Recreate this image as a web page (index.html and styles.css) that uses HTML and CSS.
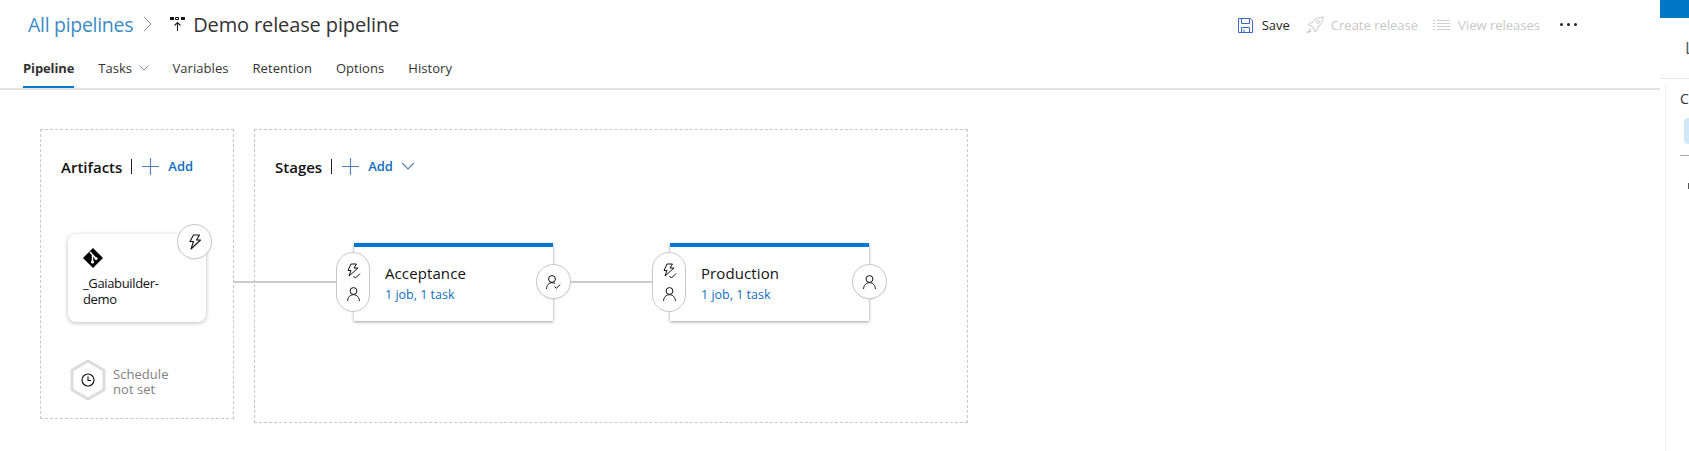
FILE: index.html
```html
<!DOCTYPE html>
<html lang="en">
<head>
<meta charset="utf-8">
<title>Demo release pipeline</title>
<link rel="stylesheet" href="styles.css">
</head>
<body>
<div class="app">
  <main class="main">
    <header class="header">
      <a class="crumb">All pipelines</a>
      <svg class="crumb-sep" width="9" height="16" viewBox="0 0 9 16"><path d="M1 1l7 7-7 7" fill="none" stroke="#8a8a8a" stroke-width="1"/></svg>
      <svg class="pipe-icon" width="16" height="16" viewBox="0 0 16 16"><path d="M0 1h4v3H0zM11 1h4v3h-4z" fill="#111"/><path d="M5.500 1.500h3v2h-3z" fill="#fff" stroke="#111"/><path d="M7.500 15V7M4.500 9.500l3-3 3 3" fill="none" stroke="#222" stroke-width="1.100"/></svg>
      <h1 class="title">Demo release pipeline</h1>
      <div class="toolbar">
        <button class="tool save">
          <svg width="15" height="15" viewBox="0 0 15 15"><path d="M.5.5h11.800l2.200 2.200v11.800H.5z M3.500.5v5h8v-5 M3.500 14.500v-5h8v5 M6 11.500v3" fill="none" stroke="#3a68c4" stroke-width="1"/></svg>
          <span>Save</span>
        </button>
        <button class="tool off rel">
          <svg width="18" height="18" viewBox="0 0 18 18"><path d="M17 1c-5 .2-8 2-10.500 5.500L4 7 2.500 9 5 9.800 8.200 13l.8 2.500 2-1.500.5-2.500C15 9 16.800 6 17 1z" fill="none" stroke="#cfcfcf" stroke-width="1.100"/><circle cx="12" cy="6" r="1.500" fill="none" stroke="#cfcfcf"/><path d="M5 12.500L1 17l4.500-2" fill="none" stroke="#cfcfcf" stroke-width="1.200"/></svg>
          <span>Create release</span>
        </button>
        <button class="tool off view">
          <svg width="17" height="12" viewBox="0 0 17 12"><path d="M4 1.500h13M4 4.500h13M4 7.500h13M4 10.500h13M0 1.500h2M0 4.500h2M0 7.500h2M0 10.500h2" stroke="#cfcfcf" stroke-width="1"/></svg>
          <span>View releases</span>
        </button>
        <div class="more" aria-label="More"><i></i><i></i><i></i></div>
      </div>
    </header>
    <nav class="tabs">
      <a class="tab active">Pipeline</a>
      <a class="tab tasks">Tasks <svg width="10" height="6" viewBox="0 0 10 6"><path d="M.5.5L5 5 9.500.5" fill="none" stroke="#8a8a8a"/></svg></a>
      <a class="tab">Variables</a>
      <a class="tab">Retention</a>
      <a class="tab">Options</a>
      <a class="tab">History</a>
    </nav>
    <section class="canvas">
      <div class="link link-a"></div>
      <div class="group artifacts">
        <div class="group-head">
          <span class="group-title">Artifacts</span>
          <span class="divider"></span>
          <svg class="plus" width="17" height="17" viewBox="0 0 17 17"><path d="M8.500 0v17M0 8.500h17" stroke="#4f82b8" stroke-width="1.100"/></svg>
          <span class="add">Add</span>
        </div>
        <div class="artifact">
          <svg class="git" width="20" height="20" viewBox="0 0 20 20"><path d="M10 0l10 10-10 10L0 10z" fill="#000"/><path d="M7 4l6 6.500M9.500 7v7" stroke="#fff" stroke-width="1.500" fill="none"/><circle cx="9.500" cy="14" r="1.600" fill="#fff"/><circle cx="13" cy="10.500" r="1.600" fill="#fff"/></svg>
          <div class="artifact-name">_Gaiabuilder-<br>demo</div>
          <div class="badge artifact-badge">
            <svg width="12" height="16" viewBox="0 0 12 16"><path d="M4.500 1h6L7.500 6h4L2 15l2.500-7.500H1z" fill="none" stroke="#111" stroke-width="1.100" stroke-linejoin="round"/></svg>
          </div>
        </div>
        <div class="schedule">
          <svg width="36" height="42" viewBox="0 0 36 42"><path d="M18 2l16 9.300v19.400L18 40 2 30.700V11.300z" fill="#fff" stroke="#dcdcdc" stroke-width="3"/><circle cx="18" cy="21" r="6" fill="none" stroke="#111" stroke-width="1.100"/><path d="M18 17.500V21.500h3" fill="none" stroke="#111" stroke-width="1.100"/></svg>
          <div class="schedule-text">Schedule<br>not set</div>
        </div>
      </div>
      <div class="group stages">
        <div class="group-head">
          <span class="group-title">Stages</span>
          <span class="divider"></span>
          <svg class="plus" width="17" height="17" viewBox="0 0 17 17"><path d="M8.500 0v17M0 8.500h17" stroke="#4f82b8" stroke-width="1.100"/></svg>
          <span class="add">Add</span>
          <svg class="add-chev" width="14" height="8" viewBox="0 0 14 8"><path d="M1 1l6 6 6-6" fill="none" stroke="#5c7fa3" stroke-width="1.100"/></svg>
        </div>
        <div class="stage-row">
          <div class="stage">
            <div class="pill">
              <svg width="15" height="16" viewBox="0 0 15 16"><path d="M5 1h5.500L8 5h4L3 13l2-5.500H2z" fill="none" stroke="#111" stroke-width="1" stroke-linejoin="round"/><path d="M7.500 13l2 2 4.500-4.500" fill="none" stroke="#111" stroke-width="1"/></svg>
              <svg width="13" height="14" viewBox="0 0 13 14"><circle cx="6.500" cy="4" r="3.400" fill="none" stroke="#111" stroke-width="1"/><path d="M.6 14c0-3.700 2.600-6.300 5.900-6.300s5.900 2.600 5.900 6.300" fill="none" stroke="#111" stroke-width="1"/></svg>
            </div>
            <div class="stage-name">Acceptance</div>
            <div class="stage-meta">1 job, 1 task</div>
            <div class="badge stage-badge">
              <svg width="15" height="14" viewBox="0 0 15 14"><circle cx="6" cy="4" r="3.400" fill="none" stroke="#111" stroke-width="1"/><path d="M.6 14c0-3.700 2.300-6.300 5.400-6.300 1.200 0 2.200.3 3 .9" fill="none" stroke="#111" stroke-width="1"/><path d="M8.500 11.500l1.800 1.800 4-3.800" fill="none" stroke="#111" stroke-width="1"/></svg>
            </div>
          </div>
          <div class="link link-b"></div>
          <div class="stage">
            <div class="pill">
              <svg width="15" height="16" viewBox="0 0 15 16"><path d="M5 1h5.500L8 5h4L3 13l2-5.500H2z" fill="none" stroke="#111" stroke-width="1" stroke-linejoin="round"/><path d="M7.500 13l2 2 4.500-4.500" fill="none" stroke="#111" stroke-width="1"/></svg>
              <svg width="13" height="14" viewBox="0 0 13 14"><circle cx="6.500" cy="4" r="3.400" fill="none" stroke="#111" stroke-width="1"/><path d="M.6 14c0-3.700 2.600-6.300 5.900-6.300s5.900 2.600 5.900 6.300" fill="none" stroke="#111" stroke-width="1"/></svg>
            </div>
            <div class="stage-name">Production</div>
            <div class="stage-meta">1 job, 1 task</div>
            <div class="badge stage-badge">
              <svg width="13" height="14" viewBox="0 0 13 14"><circle cx="6.500" cy="4" r="3.400" fill="none" stroke="#111" stroke-width="1"/><path d="M.6 14c0-3.700 2.600-6.300 5.900-6.300s5.900 2.600 5.900 6.300" fill="none" stroke="#111" stroke-width="1"/></svg>
            </div>
          </div>
        </div>
      </div>
    </section>
  </main>
  <aside class="side">
    <div class="side-bar"></div>
    <div class="side-head">L</div>
    <div class="side-body">
      <div class="side-label">C</div>
      <div class="side-chip"></div>
      <div class="side-rule"></div>
      <div class="side-mark"></div>
    </div>
  </aside>
</div>
</body>
</html>
```
FILE: styles.css
```css
* { box-sizing: border-box; }
html, body { margin: 0; padding: 0; background: #fff; }
body { font-family: "Open Sans", "Noto Sans", "Liberation Sans", sans-serif; color: #212121; }
.app { display: flex; width: 1689px; height: 451px; overflow: hidden; }
.main { width: 1660px; flex: none; display: flex; flex-direction: column; }

.header { height: 48px; display: flex; align-items: center; padding-left: 28px; }
.crumb { font-size: 19.500px; letter-spacing: -0.3px; color: #3a8cc4; }
.crumb-sep { margin-left: 10px; }
.pipe-icon { margin-left: 18px; }
.title { margin: 0 0 0 7px; font-size: 20px; font-weight: 400; letter-spacing: -0.12px; color: #333; }
.toolbar { margin-left: auto; margin-top: 2px; margin-right: 83px; display: flex; align-items: center; }
.tool { display: flex; align-items: center; border: 0; background: none; padding: 0; font: inherit; font-size: 13px; color: #222; }
.tool.off { color: #c8c8c8; }
.save { gap: 9px; }
.rel { gap: 7px; margin-left: 16px; }
.view { gap: 8px; margin-left: 15px; }
.more { display: flex; gap: 4px; margin-left: 20px; margin-top: -1px; }
.more i { width: 3px; height: 3px; background: #222; border-radius: 50%; }

.tabs { height: 42px; display: flex; align-items: flex-start; gap: 24px; padding-left: 23px; border-bottom: 2px solid #e2e2e2; }
.tab { height: 40px; padding-top: 10px; font-size: 13px; line-height: 20px; color: #333; letter-spacing: 0.05px; white-space: nowrap; }
.tab.active { font-weight: 700; border-bottom: 2px solid #0078d4; letter-spacing: -0.12px; }
.tasks svg { margin-left: 3px; vertical-align: 2px; }

.canvas { position: relative; flex: 1; display: flex; align-items: flex-start; gap: 20px; padding: 39px 0 0 40px; }
.group { border: 1px dashed #c8c8c8; }
.artifacts { width: 194px; height: 290px; padding: 19px 0 0 20px; }
.stages { width: 714px; height: 294px; padding: 19px 0 0 20px; }
.group-head { display: flex; align-items: center; height: 34px; }
.group-title { margin-top: 2px; font-size: 15px; font-weight: 600; color: #111; }
.divider { width: 1px; height: 15px; background: #222; margin-left: 9px; }
.plus { margin-left: 10px; }
.add { margin-left: 9px; font-size: 13px; font-weight: 600; color: #106ebe; }
.add-chev { margin-left: 8px; }

.link { background: #ccc; height: 2px; }
.link-a { position: absolute; left: 233px; top: 191px; width: 103px; }
.link-b { width: 117px; flex: none; margin-top: -1px; }

.artifact { position: relative; width: 138px; height: 88px; margin: 51px 0 0 7px; background: #fff; border-radius: 8px; box-shadow: 0 1px 4px rgba(0,0,0,.28); padding: 14px 0 0 15px; }
.git { display: block; }
.artifact-name { margin-top: 7px; font-size: 13px; line-height: 16px; color: #111; letter-spacing: -0.35px; }
.badge { position: absolute; width: 35px; height: 35px; border-radius: 50%; background: #fff; border: 1px solid #c8c8c8; box-shadow: 0 1px 2px rgba(0,0,0,.08); display: flex; align-items: center; justify-content: center; }
.artifact-badge { right: -6px; top: -10px; }

.schedule { display: flex; align-items: center; margin: 37px 0 0 9px; }
.schedule-text { margin-left: 7px; margin-top: 3px; font-size: 13px; line-height: 15px; color: #7f7f7f; letter-spacing: 0.05px; }

.stage-row { display: flex; align-items: center; margin: 60px 0 0 79px; }
.stage { position: relative; flex: none; width: 199px; height: 78px; background: #fff; border-top: 4px solid #0078d4; box-shadow: 0 1px 3px rgba(0,0,0,.4); padding: 15px 0 0 31px; }
.pill { position: absolute; left: -18px; top: 5px; width: 34px; height: 60px; border-radius: 17px; background: #fff; border: 1px solid #c8c8c8; display: flex; flex-direction: column; align-items: center; justify-content: center; gap: 8px; }
.stage-name { font-size: 15px; line-height: 22px; color: #111; letter-spacing: 0.1px; }
.stage-meta { font-size: 12.500px; line-height: 22px; color: #106ebe; }
.stage-badge { right: -18px; top: 17px; }

.side { flex: 1; min-width: 0; display: flex; flex-direction: column; overflow: hidden; }
.side-bar { height: 18px; background: #0078c8; flex: none; }
.side-head { height: 61px; flex: none; padding: 18px 0 0 25px; font-size: 17px; line-height: 24px; color: #555; border-bottom: 1px solid #e8e8e8; }
.side-body { flex: 1; margin: 5px 0 0 5px; border-left: 1px solid #eee; padding-left: 14px; }
.side-label { font-size: 14px; line-height: 20px; margin-top: 5px; color: #333; }
.side-chip { width: 20px; height: 26px; margin: 9px 0 0 4px; background: #d2e8f9; border-radius: 4px; }
.side-rule { height: 1px; background: #aaa; margin-top: 11px; }
.side-mark { width: 2px; height: 6px; margin: 27px 0 0 8px; background: #555; }
```
